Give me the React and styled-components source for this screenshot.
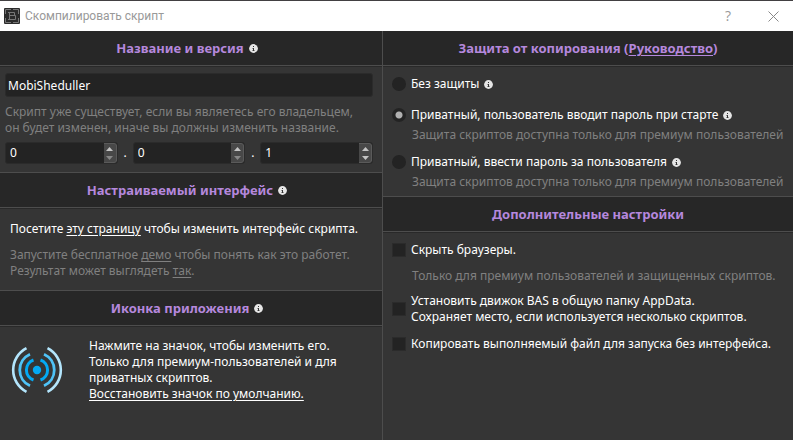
import React, { useState } from 'react';
import styled, { createGlobalStyle } from 'styled-components';

const GlobalStyle = createGlobalStyle`
	* {
		box-sizing: border-box;
	}
	body {
		margin: 0;
		background: #353535;
		color: #fff;
		font-family: "Noto Sans", sans-serif;
		font-size: 12px;
		line-height: 16px;
	}
	input, button {
		font: inherit;
		color: inherit;
	}
`;

const StyledWindow = styled.div`
	display: flex;
	flex-direction: column;
	min-height: 100vh;
	border-top: 1px solid #424042;
`;

const TitleBar = styled.header`
	display: flex;
	align-items: center;
	height: 30px;
	padding-left: 4px;
	background: #fff;
	color: #999;
`;

const WindowTitle = styled.h1`
	flex: 1;
	margin: 0 0 0 5px;
	font-family: Roboto, sans-serif;
	font-size: 12px;
	font-weight: 400;
`;

const TitleButtons = styled.div`
	display: flex;
	gap: 5px;
`;

const TitleButton = styled.button`
	display: flex;
	align-items: center;
	justify-content: center;
	width: 40px;
	height: 30px;
	padding: 0;
	border: 0;
	background: none;
	font-family: "Open Sans", sans-serif;
	font-size: 14px;
`;

const Columns = styled.main`
	flex: 1;
	display: grid;
	grid-template-columns: 383fr 410fr;
`;

const Column = styled.div`
	min-width: 0;
	border-right: ${props => props.$divided ? '1px solid #4d4d4d' : '0'};
`;

const SectionHeader = styled.h2`
	display: flex;
	align-items: center;
	justify-content: center;
	gap: 5px;
	height: ${props => props.$first ? '35px' : '36px'};
	margin: 0;
	padding-right: ${props => props.$withInfo ? '8px' : '0'};
	border-top: ${props => props.$first ? '0' : '1px solid #4d4d4d'};
	border-bottom: 1px solid #4d4d4d;
	background: #272727;
	box-shadow: 0 1px #292929;
	color: #b588dd;
	font-size: 13px;
	font-weight: 700;
`;

const SectionBody = styled.div`
	padding: ${props => props.$padding};
`;

const NameInput = styled.input`
	display: block;
	width: 100%;
	height: 24px;
	padding: 0 2px;
	border: 1px solid #2b2b2b;
	border-radius: 3px;
	background: #232323;
	outline: none;
`;

const Text = styled.p`
	margin: 0;
	margin-top: ${props => props.$top || 0}px;
	color: ${props => props.$muted ? '#808080' : '#fff'};
	white-space: nowrap;
`;

const Link = styled.a`
	color: inherit;
	text-decoration: underline;
	text-underline-offset: 2px;
`;

const VersionRow = styled.div`
	display: flex;
	align-items: center;
	margin: 6px 0 8px;
`;

const Dot = styled.span`
	width: 15px;
	text-align: center;
`;

const SpinBox = styled.div`
	flex: 1;
	display: flex;
	height: 22px;
	min-width: 0;
	border: 1px solid #2b2b2b;
	border-radius: 3px;
	background: #232323;
	overflow: hidden;
`;

const SpinInput = styled.input`
	flex: 1;
	min-width: 0;
	padding: 0 4px;
	border: 0;
	background: none;
	outline: none;
	appearance: textfield;
	&::-webkit-inner-spin-button {
		display: none;
	}
`;

const SpinButtons = styled.div`
	display: flex;
	flex-direction: column;
	width: 13px;
	border: 1px solid #5a5a5a;
	border-left: 0;
	border-radius: 0 3px 3px 0;
	background: #484848;
`;

const SpinButton = styled.button`
	flex: 1;
	display: flex;
	align-items: center;
	justify-content: center;
	padding: 0;
	border: 0;
	background: none;
	color: ${props => props.$dim ? '#888' : '#c4c4c4'};
`;

const AppIcon = styled.div`
	display: flex;
	gap: 26px;
`;

const IconButton = styled.button`
	display: flex;
	align-items: center;
	width: 52px;
	height: 64px;
	padding: 0;
	border: 0;
	background: none;
`;

const Option = styled.div`
	display: flex;
	align-items: center;
	gap: 5px;
	margin-top: ${props => props.$top || 0}px;
	white-space: nowrap;
`;

const OptionLabel = styled.label`
	display: flex;
	align-items: center;
	gap: 5px;
`;

const Hint = styled(Text)`
	margin-left: 20px;
`;

const Radio = styled.input`
	appearance: none;
	flex: none;
	width: 14px;
	height: 14px;
	margin: 0;
	border-radius: 50%;
	background: #232323;
	&:checked {
		background: radial-gradient(circle, #b0b0b0 3px, #232323 4px);
	}
`;

const Checkbox = styled.input`
	appearance: none;
	flex: none;
	width: 14px;
	height: 14px;
	margin: 0;
	border: 1px solid #2b2b2b;
	background: #232323;
	&:checked {
		background: #b0b0b0;
	}
`;

const InfoIcon = () => (
	<svg width="9" height="9" viewBox="0 0 9 9" aria-hidden="true">
		<circle cx="4.5" cy="4.5" r="4.4" fill="#e6e6e6" />
		<path d="M4 2h1v1H4zM4 4h1v3H4z" fill="#333" />
		<path d="M3 4h1v1H3zM3 6h1v1H3zM5 6h1v1H5z" fill="#999" />
	</svg>
);

const LogoIcon = () => (
	<svg width="16" height="16" viewBox="0 0 16 16" aria-hidden="true">
		<rect width="16" height="16" rx="1" fill="#2b2b2b" />
		<path d="M1.5 6V1.5H7M9 1.5h5.5V6M14.5 10v4.5H9M7 14.5H1.5V10" fill="none" stroke="#777" />
		<path d="M4 4.5h6.5v3M5.500 4.5v7M4 11.5h7.5v-4H5.5" fill="none" stroke="#777" />
	</svg>
);

const SignalIcon = () => (
	<svg width="52" height="46" viewBox="0 0 52 46" fill="none" aria-hidden="true">
		<circle cx="26" cy="23" r="4.2" fill="#03a9f4" />
		<g stroke="#03a9f4" strokeWidth="3">
			<path d="M22.5 13A10.600 10.600 0 0 0 22.5 33" />
			<path d="M29.5 13A10.600 10.600 0 0 1 29.5 33" />
		</g>
		<g stroke="#4fc3f7" strokeWidth="2.8">
			<path d="M19 7.2A17.3 17.3 0 0 0 19 38.8" />
			<path d="M33 7.2A17.3 17.3 0 0 1 33 38.8" />
		</g>
		<g stroke="#b3e5fc" strokeWidth="2.6">
			<path d="M15.5 1.2A24.5 24.5 0 0 0 15.5 44.8" />
			<path d="M36.5 1.2A24.5 24.5 0 0 1 36.5 44.8" />
		</g>
	</svg>
);

const VersionPart = ({ label, initial }) => {
	const [value, setValue] = useState(initial);
	return (
		<SpinBox>
			<SpinInput
				type="number"
				min="0"
				aria-label={label}
				value={value}
				onChange={e => setValue(Number(e.target.value))}
			/>
			<SpinButtons>
				<SpinButton type="button" aria-label="+" onClick={() => setValue(value + 1)}>
					<svg width="7" height="4" viewBox="0 0 7 4"><path d="M0 4L3.5 0 7 4z" fill="currentColor" /></svg>
				</SpinButton>
				<SpinButton type="button" aria-label="-" $dim={value === 0} onClick={() => setValue(Math.max(0, value - 1))}>
					<svg width="7" height="4" viewBox="0 0 7 4"><path d="M0 0h7L3.5 4z" fill="currentColor" /></svg>
				</SpinButton>
			</SpinButtons>
		</SpinBox>
	);
};

const RadioOption = ({ id, top, checked, onSelect, children }) => (
	<Option $top={top}>
		<Radio type="radio" name="protection" id={id} checked={checked} onChange={() => onSelect(id)} />
		<OptionLabel htmlFor={id}>{children}<InfoIcon /></OptionLabel>
	</Option>
);

const CheckOption = ({ id, top, children }) => (
	<Option $top={top}>
		<Checkbox type="checkbox" id={id} />
		<label htmlFor={id}>{children}</label>
	</Option>
);

const App = () => {
	const [name, setName] = useState('MobiSheduller');
	const [protection, setProtection] = useState('private-ask');

	return (
		<StyledWindow>
			<GlobalStyle />
			<TitleBar>
				<LogoIcon />
				<WindowTitle>Скомпилировать скрипт</WindowTitle>
				<TitleButtons>
					<TitleButton type="button">?</TitleButton>
					<TitleButton type="button" aria-label="Закрыть">
						<svg width="11" height="11" viewBox="0 0 11 11"><path d="M.5.5l10 10M10.5.5l-10 10" stroke="#888" /></svg>
					</TitleButton>
				</TitleButtons>
			</TitleBar>
			<Columns>
				<Column $divided>
					<SectionHeader $first $withInfo>Название и версия<InfoIcon /></SectionHeader>
					<SectionBody $padding="7px 9px 0 5px">
						<NameInput aria-label="Название" value={name} onChange={e => setName(e.target.value)} />
						<Text $muted $top={7}>
							Скрипт уже существует, если вы являетесь его владельцем,<br />
							он будет изменен, иначе вы должны изменить название.
						</Text>
						<VersionRow>
							<VersionPart label="Версия 1" initial={0} />
							<Dot>.</Dot>
							<VersionPart label="Версия 2" initial={0} />
							<Dot>.</Dot>
							<VersionPart label="Версия 3" initial={1} />
						</VersionRow>
					</SectionBody>
					<SectionHeader $withInfo>Настраиваемый интерфейс<InfoIcon /></SectionHeader>
					<SectionBody $padding="13px 10px 11px">
						<Text>Посетите <Link href="#interface">эту страницу</Link> чтобы изменить интерфейс скрипта.</Text>
						<Text $muted $top={10}>
							Запустите бесплатное <Link href="#demo">демо</Link> чтобы понять как это работет.<br />
							Результат может выглядеть <Link href="#result">так</Link>.
						</Text>
					</SectionBody>
					<SectionHeader $withInfo>Иконка приложения<InfoIcon /></SectionHeader>
					<SectionBody $padding="12px 9px 12px 11px">
						<AppIcon>
							<IconButton type="button" aria-label="Иконка приложения"><SignalIcon /></IconButton>
							<Text>
								Нажмите на значок, чтобы изменить его.<br />
								Только для премиум-пользователей и для<br />
								приватных скриптов.<br />
								<Link href="#restore">Восстановить значок по умолчанию.</Link>
							</Text>
						</AppIcon>
					</SectionBody>
				</Column>
				<Column>
					<SectionHeader $first><span>Защита от копирования (<Link href="#guide">Руководство</Link>)</span></SectionHeader>
					<SectionBody $padding="10px 0 6px 9px">
						<RadioOption id="none" checked={protection === 'none'} onSelect={setProtection}>
							Без защиты
						</RadioOption>
						<RadioOption id="private-ask" top={15} checked={protection === 'private-ask'} onSelect={setProtection}>
							Приватный, пользователь вводит пароль при старте
						</RadioOption>
						<Hint $muted $top={4}>Защита скриптов доступна только для премиум пользователей</Hint>
						<RadioOption id="private-enter" top={11} checked={protection === 'private-enter'} onSelect={setProtection}>
							Приватный, ввести пароль за пользователя
						</RadioOption>
						<Hint $muted $top={4}>Защита скриптов доступна только для премиум пользователей</Hint>
					</SectionBody>
					<SectionHeader>Дополнительные настройки</SectionHeader>
					<SectionBody $padding="10px 0 10px 9px">
						<CheckOption id="hide-browsers">Скрыть браузеры.</CheckOption>
						<Hint $muted $top={10}>Только для премиум пользователей и защищенных скриптов.</Hint>
						<CheckOption id="appdata" top={9}>
							Установить движок BAS в общую папку AppData.<br />
							Сохраняет место, если используется несколько скриптов.
						</CheckOption>
						<CheckOption id="copy-exe" top={11}>Копировать выполняемый файл для запуска без интерфейса.</CheckOption>
					</SectionBody>
				</Column>
			</Columns>
		</StyledWindow>
	);
};

export default App;
